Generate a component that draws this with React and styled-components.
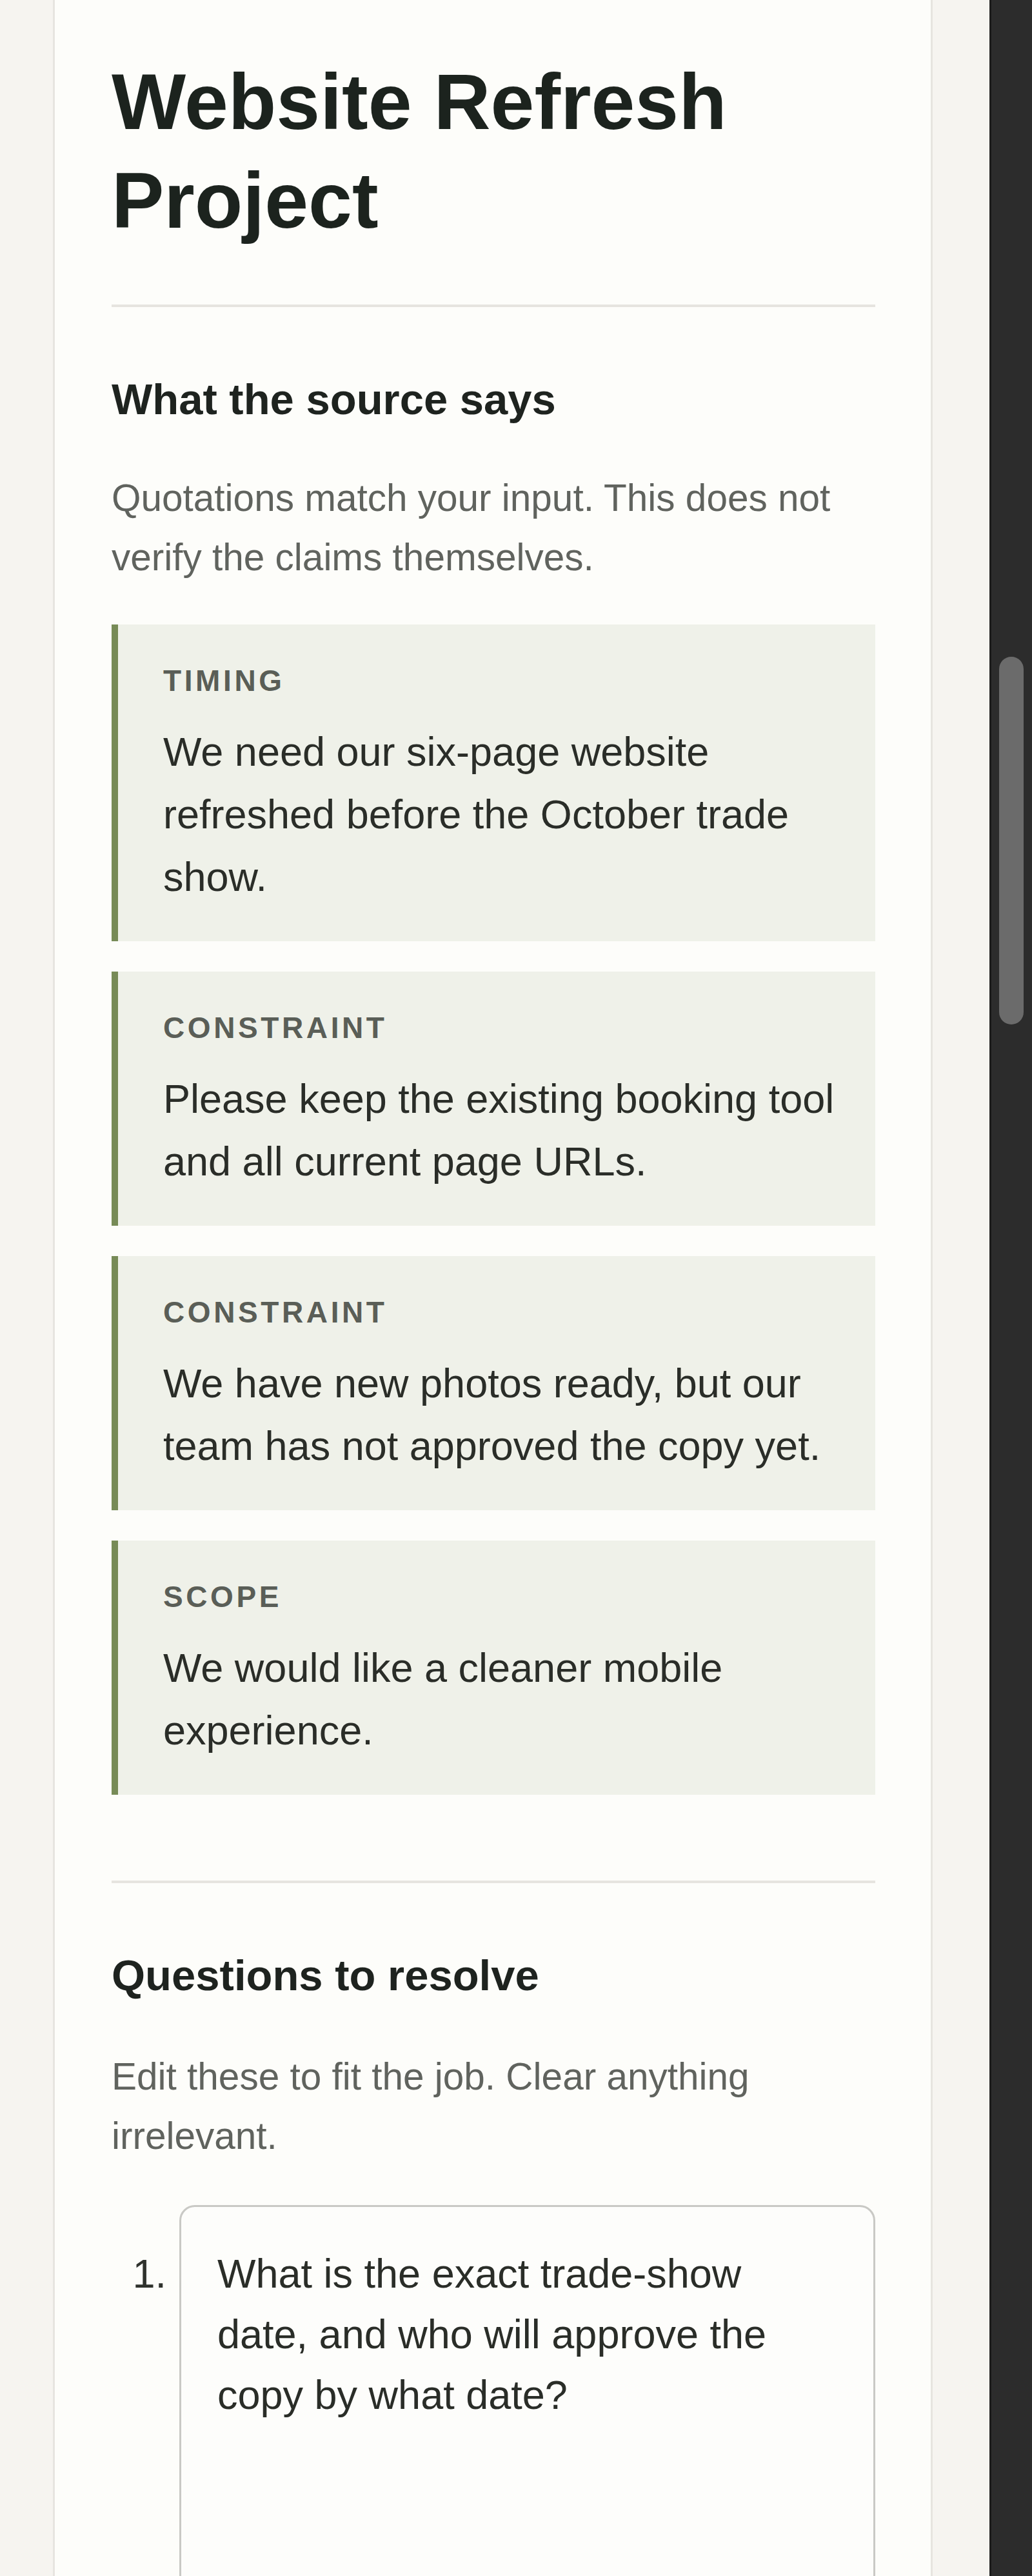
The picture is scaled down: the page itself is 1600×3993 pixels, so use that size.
import React from 'react';
import styled, { createGlobalStyle } from 'styled-components';

const GlobalStyle = createGlobalStyle`
   html, body {
      margin: 0;
      padding: 0;
      background: #f6f4f0;
      font-family: "Liberation Sans", Arial, Helvetica, sans-serif;
   }
   * {
      box-sizing: border-box;
   }
`;

const Page = styled.div`
   display: flex;
   height: 3993px;
   overflow: hidden;
`;

const Main = styled.main`
   flex: 1;
   padding: 0 88px 0 82px;
`;

const Card = styled.article`
   min-height: 3993px;
   background: #fdfdfa;
   border-left: 3px solid #e7e5e0;
   border-right: 3px solid #e7e5e0;
   padding: 82px 86px 0 88px;
`;

const Title = styled.h1`
   margin: 0;
   font-size: 122px;
   line-height: 153px;
   font-weight: 700;
   color: #1c231e;
`;

const Divider = styled.hr`
   border: 0;
   height: 4px;
   background: #e6e4df;
   margin: ${(p) => p.$top}px 0 0 0;
`;

const SectionTitle = styled.h2`
   margin: 99px 0 0 0;
   font-size: 67px;
   line-height: 87px;
   font-weight: 700;
   color: #1e231f;
`;

const Lead = styled.p`
   margin: ${(p) => p.$top || 64}px 0 0 0;
   font-size: 58.5px;
   line-height: 92px;
   color: #60635e;
`;

const QuoteList = styled.div`
   display: flex;
   flex-direction: column;
   gap: 47px;
   margin-top: 58px;
`;

const Quote = styled.blockquote`
   margin: 0;
   background: #eff1e9;
   border-left: 10px solid #778b57;
   padding: 53px 38px 51px 70px;
`;

const Tag = styled.div`
   font-size: 46px;
   line-height: 69px;
   font-weight: 700;
   letter-spacing: 0.1em;
   text-transform: uppercase;
   color: #5a5e57;
`;

const QuoteText = styled.p`
   margin: 27px 0 0 0;
   font-size: 63px;
   line-height: 97px;
   color: #2a2d28;
`;

const QuestionList = styled.ol`
   list-style: none;
   margin: 61px 0 0 0;
   padding: 0;
`;

const QuestionRow = styled.li`
   display: flex;
   align-items: flex-start;
`;

const Num = styled.span`
   width: 105px;
   flex: none;
   padding: 59px 20px 0 0;
   text-align: right;
   font-size: 63px;
   line-height: 94px;
   color: #2f322d;
`;

const Field = styled.textarea`
   flex: 1;
   height: 720px;
   resize: none;
   border: 3px solid #c9c9c5;
   border-radius: 24px;
   padding: 56px;
   background: #fdfdfb;
   font-family: inherit;
   font-size: 63px;
   line-height: 94px;
   color: #2a2d28;
   outline: none;
`;

const Rail = styled.div`
   width: 66px;
   flex: none;
   background: #2c2c2c;
   border-left: 3px solid #1c1c1c;
   padding: 1018px 0 0 12px;
`;

const Thumb = styled.div`
   width: 38px;
   height: 570px;
   border-radius: 19px;
   background: #6b6b6b;
`;

const quotes = [
   { tag: 'Timing', text: 'We need our six-page website refreshed before the October trade show.' },
   { tag: 'Constraint', text: 'Please keep the existing booking tool and all current page URLs.' },
   { tag: 'Constraint', text: 'We have new photos ready, but our team has not approved the copy yet.' },
   { tag: 'Scope', text: 'We would like a cleaner mobile experience.' },
];

const questions = [
   'What is the exact trade-show date, and who will approve the copy by what date?',
];

export default function App() {
   return (
      <Page>
         <GlobalStyle />
         <Main>
            <Card>
               <Title>Website Refresh Project</Title>
               <Divider $top={84} />

               <SectionTitle>What the source says</SectionTitle>
               <Lead>Quotations match your input. This does not verify the claims themselves.</Lead>
               <QuoteList>
                  {quotes.map((q, i) => (
                     <Quote key={i}>
                        <Tag>{q.tag}</Tag>
                        <QuoteText>{q.text}</QuoteText>
                     </Quote>
                  ))}
               </QuoteList>

               <Divider $top={133} />

               <SectionTitle>Questions to resolve</SectionTitle>
               <Lead $top={68}>Edit these to fit the job. Clear anything irrelevant.</Lead>
               <QuestionList>
                  {questions.map((q, i) => (
                     <QuestionRow key={i}>
                        <Num>{i + 1}.</Num>
                        <Field defaultValue={q} />
                     </QuestionRow>
                  ))}
               </QuestionList>
            </Card>
         </Main>
         <Rail>
            <Thumb />
         </Rail>
      </Page>
   );
}
